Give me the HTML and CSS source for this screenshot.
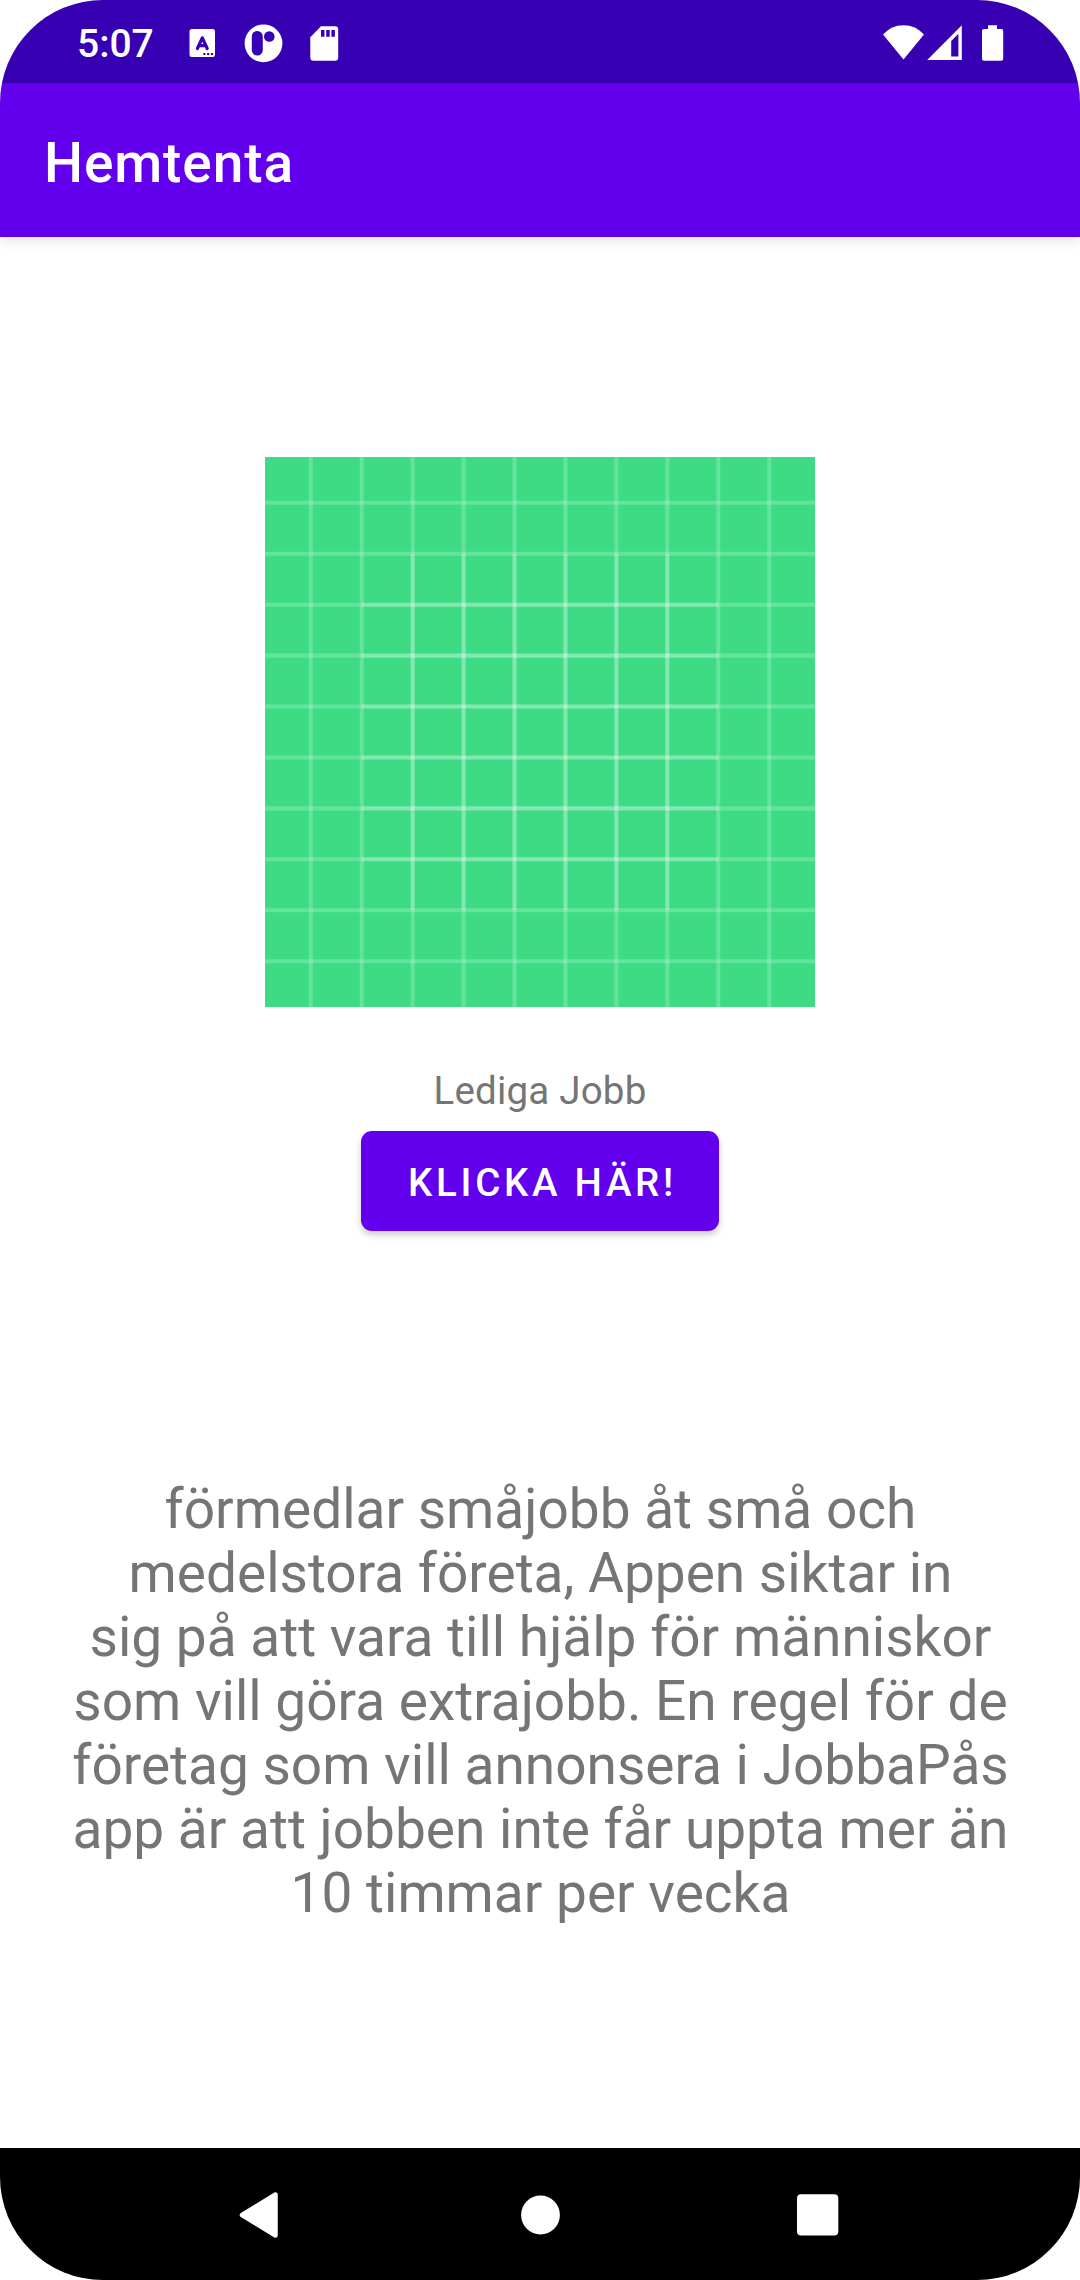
FILE: index.html
```html
<!DOCTYPE html>
<html lang="sv">
<head>
<meta charset="utf-8">
<title>Hemtenta</title>
<link rel="stylesheet" href="styles.css">
</head>
<body>
<div class="screen">
  <div class="status">
    <span class="clock">5:07</span>
    <svg class="notifications" width="160" height="83" viewBox="180 0 160 83">
      <rect x="189.500" y="29" width="25.500" height="28" rx="2.500" fill="#fff"/>
      <path d="M197.400 48.500L202.300 37.800L207.200 48.500M199.500 45.600H205" fill="none" stroke="#3700b3" stroke-width="3.200" stroke-linecap="round" stroke-linejoin="round"/>
      <path d="M203.300 52.900h2.100v2.100h-2.100zM207.100 52.900h2.100v2.100h-2.100zM210.900 52.900h2.100v2.100h-2.100z" fill="#3700b3"/>
      <circle cx="263.500" cy="43.300" r="18.900" fill="#fff"/>
      <rect x="251.800" y="31" width="11" height="24.500" rx="5.500" fill="#3700b3"/>
      <circle cx="269.300" cy="36.500" r="5.300" fill="#3700b3"/>
      <path d="M321 26.300H335q3.200 0 3.200 3.200V57.500q0 3.200-3.200 3.200H313.500q-3.200 0-3.200-3.200V37.200z" fill="#fff"/>
      <path d="M321 30h3.500v6.700h-3.500zM326.200 30h3.500v6.700h-3.500zM331.400 30h3.500v6.700h-3.500z" fill="#3700b3"/>
    </svg>
    <svg class="system" width="130" height="83" viewBox="880 0 130 83">
      <path d="M903.500 59.500L883 34.500Q891.300 25.300 903.500 25.300T924 34.500z" fill="#fff"/>
      <path d="M961.800 25.200V60H927.200zM958.400 33.700L951.200 41V56.500H958.400z" fill="#fff" fill-rule="evenodd"/>
      <path d="M988 25.300H997V29H1001.200q2 0 2 2V58.800q0 2-2 2H984q-2 0-2-2V31q0-2 2-2H988z" fill="#fff"/>
    </svg>
  </div>
  <header class="appbar"><h1 class="title">Hemtenta</h1></header>
  <main class="content">
    <svg class="picture" viewBox="0 0 108 108">
      <path d="M0 0h108v108H0z" fill="#3ddc84"/>
      <g stroke="#fff" stroke-opacity=".2" stroke-width=".8">
        <path d="M9 0v108"/><path d="M19 0v108"/><path d="M29 0v108"/><path d="M39 0v108"/><path d="M49 0v108"/><path d="M59 0v108"/><path d="M69 0v108"/><path d="M79 0v108"/><path d="M89 0v108"/><path d="M99 0v108"/>
        <path d="M0 9h108"/><path d="M0 19h108"/><path d="M0 29h108"/><path d="M0 39h108"/><path d="M0 49h108"/><path d="M0 59h108"/><path d="M0 69h108"/><path d="M0 79h108"/><path d="M0 89h108"/><path d="M0 99h108"/>
        <path d="M19 29h70"/><path d="M19 39h70"/><path d="M19 49h70"/><path d="M19 59h70"/><path d="M19 69h70"/><path d="M19 79h70"/>
        <path d="M29 19v70"/><path d="M39 19v70"/><path d="M49 19v70"/><path d="M59 19v70"/><path d="M69 19v70"/><path d="M79 19v70"/>
      </g>
    </svg>
    <p class="label">Lediga Jobb</p>
    <button class="button">KLICKA HÄR!</button>
    <p class="description">förmedlar småjobb åt små och<br>medelstora företa, Appen siktar in<br>sig på att vara till hjälp för människor<br>som vill göra extrajobb. En regel för de<br>företag som vill annonsera i JobbaPås<br>app är att jobben inte får uppta mer än<br>10 timmar per vecka</p>
  </main>
  <nav class="navbar">
    <svg width="39" height="46" viewBox="0 0 39 46"><path d="M3 23L36.500 2.500V43.500z" fill="#fff" stroke="#fff" stroke-width="4.500" stroke-linejoin="round"/></svg>
    <svg class="home" width="39" height="46" viewBox="0 0 39 46"><circle cx="19.500" cy="23" r="19.400" fill="#fff"/></svg>
    <svg width="42" height="46" viewBox="0 0 42 46"><rect y="2.300" width="41.300" height="41.300" rx="4" fill="#fff"/></svg>
  </nav>
</div>
</body>
</html>
```
FILE: styles.css
```css
* { box-sizing: border-box; }
body { margin: 0; background: #fff; font-family: Roboto, sans-serif; }
.screen {
  display: flex;
  flex-direction: column;
  width: 1080px;
  height: 2280px;
  overflow: hidden;
  border-radius: 103px;
  background: #fff;
}
.status {
  display: flex;
  align-items: center;
  height: 83px;
  padding: 0 70px 0 77px;
  background: #3700b3;
  color: #fff;
}
.clock { width: 103px; padding-top: 5px; font-size: 39px; font-weight: 500; line-height: 46px; white-space: nowrap; }
.system { margin-left: auto; }
.appbar {
  height: 154px;
  padding: 48px 44px 0;
  background: #6200ee;
  color: #fff;
  box-shadow: 0 4px 12px rgba(0, 0, 0, .1);
}
.title { margin: 0; font-size: 55px; font-weight: 500; line-height: 64px; letter-spacing: .9px; }
.content { display: flex; flex: 1; flex-direction: column; align-items: center; padding-top: 220px; }
.picture { width: 550px; height: 550px; }
.label { margin: 58px 0 15px; color: #757575; font-size: 38.5px; line-height: 51px; letter-spacing: .2px; }
.button {
  width: 358px;
  height: 100px;
  padding: 4px 0 0 5px;
  border: 0;
  border-radius: 11px;
  background: #6200ee;
  color: #fff;
  font: 500 38.5px/46px Roboto, sans-serif;
  letter-spacing: 3.7px;
  white-space: nowrap;
  box-shadow: 0 4px 7px rgba(0, 0, 0, .2);
}
.description { margin: 246px 0 0; padding-left: 1px; color: #757575; font-size: 55px; line-height: 64px; text-align: center; white-space: nowrap; }
.navbar {
  display: flex;
  align-items: center;
  justify-content: space-between;
  height: 132px;
  padding: 1px 241px 0 239px;
  background: #000;
}
.home { margin-left: 5px; }
```
